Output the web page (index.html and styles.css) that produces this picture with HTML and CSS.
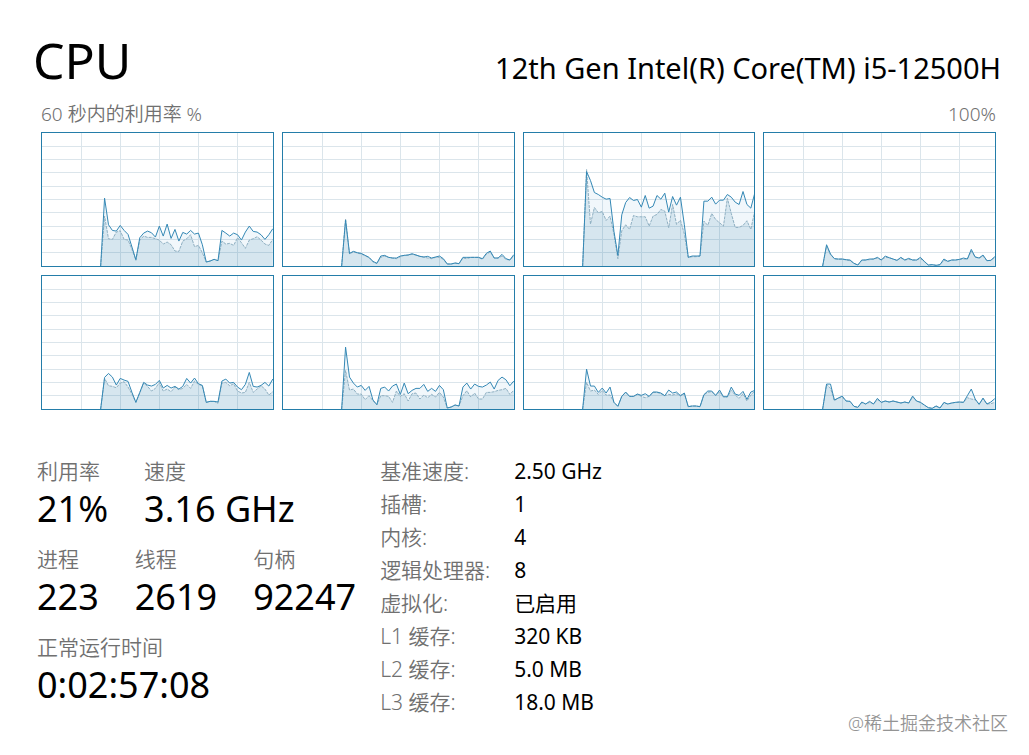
FILE: index.html
```
<!DOCTYPE html>
<html lang="zh-CN">
<head>
    <meta charset="UTF-8">
    <meta name="viewport" content="width=device-width, initial-scale=1.0">
    <title>CPU</title>
    <link rel="stylesheet" href="styles.css">
</head>
<body>
    <main class="container">
        <header class="header">
            <h1>CPU</h1>
            <p class="model">12th Gen Intel(R) Core(TM) i5-12500H</p>
        </header>

        <section class="usage">
            <div class="usage-title">
                <span>60 秒内的利用率 %</span>
                <span>100%</span>
            </div>
            <div class="cores" id="cores"></div>
        </section>

        <section class="details">
            <div class="stats">
                <dl class="stats-row">
                    <div class="stat"><dt>利用率</dt><dd>21%</dd></div>
                    <div class="stat"><dt>速度</dt><dd>3.16 GHz</dd></div>
                </dl>
                <dl class="stats-row">
                    <div class="stat"><dt>进程</dt><dd>223</dd></div>
                    <div class="stat"><dt>线程</dt><dd>2619</dd></div>
                    <div class="stat"><dt>句柄</dt><dd>92247</dd></div>
                </dl>
                <dl class="stats-row">
                    <div class="stat"><dt>正常运行时间</dt><dd>0:02:57:08</dd></div>
                </dl>
            </div>
            <table class="specs">
                <tr><th scope="row">基准速度:</th><td>2.50 GHz</td></tr>
                <tr><th scope="row">插槽:</th><td>1</td></tr>
                <tr><th scope="row">内核:</th><td>4</td></tr>
                <tr><th scope="row">逻辑处理器:</th><td>8</td></tr>
                <tr><th scope="row">虚拟化:</th><td>已启用</td></tr>
                <tr><th scope="row">L1 缓存:</th><td>320 KB</td></tr>
                <tr><th scope="row">L2 缓存:</th><td>5.0 MB</td></tr>
                <tr><th scope="row">L3 缓存:</th><td>18.0 MB</td></tr>
            </table>
        </section>
        <p class="watermark">@稀土掘金技术社区</p>
    </main>

    <script src="script.js"></script>
</body>
</html>
```

FILE: styles.css
```
* {
    margin: 0;
    padding: 0;
    box-sizing: border-box;
}

body {
    background: #fff;
    color: #000;
    font-family: 'Noto Sans', 'Noto Sans CJK SC', sans-serif;
}

.container {
    position: relative;
    min-height: 100vh;
    padding: 28px 33px 24px 37px;
}

.header {
    display: flex;
    justify-content: space-between;
    align-items: baseline;
    margin: 0 -5px 0 -4px;
}

h1 {
    font-size: 50px;
    font-weight: 400;
    line-height: 64px;
}

.model {
    font-size: 29px;
    line-height: 40px;
}

.usage {
    padding-left: 4px;
}

.usage-title {
    display: flex;
    justify-content: space-between;
    margin-top: 8px;
    margin-bottom: 4px;
    color: #707070;
    font-size: 19px;
    font-weight: 350;
    line-height: 28px;
}

.cores {
    display: grid;
    grid-template-columns: repeat(4, 1fr);
    gap: 8px;
}

.core {
    display: block;
    width: 100%;
    height: 135px;
    border: 1px solid #247da9;
}

.core path,
.core polyline {
    vector-effect: non-scaling-stroke;
}

.area {
    fill: #117dbb;
    fill-opacity: 0.06;
}

.area-kernel {
    fill: #1a6c9e;
    fill-opacity: 0.12;
}

.grid {
    fill: none;
    stroke: #c3d3dd;
    stroke-opacity: 0.6;
    shape-rendering: crispEdges;
}

.line {
    fill: none;
    stroke: #3488b5;
}

.line-kernel {
    fill: none;
    stroke: #8fb0c2;
    stroke-dasharray: 3 1;
}

.details {
    display: flex;
    gap: 24px;
    margin-top: 45px;
}

.stats-row {
    display: flex;
    gap: 36px;
    height: 88px;
}

dt,
th {
    color: #707070;
    font-weight: 350;
    text-align: left;
}

dt {
    font-size: 21px;
    line-height: 32px;
}

dd {
    font-size: 36px;
    line-height: 44px;
}

.specs {
    align-self: flex-start;
    border-collapse: collapse;
    font-size: 21px;
    line-height: 33px;
}

.specs th {
    width: 134px;
    font-size: 21px;
}

.watermark {
    position: absolute;
    right: 21px;
    bottom: 18px;
    color: #949494;
    font-size: 18px;
    font-weight: 350;
    line-height: 28px;
}
```

FILE: script.js
```
// 每个逻辑处理器的采样，高度范围 0-400，前 15 个采样为空
const START = 15;
const SAMPLES = 59;

const cores = [
    {
        total: [0,204,124,107,105,122,107,95,57,19,85,99,105,100,87,120,90,126,83,110,75,101,96,107,96,99,64,12,15,20,16,107,99,90,99,94,78,102,120,104,102,94,80,94,112],
        kernel: [0,150,82,80,102,106,80,78,50,17,78,90,86,86,82,78,66,72,64,45,44,75,82,94,58,62,40,12,15,20,16,75,66,68,62,85,70,53,78,82,88,78,66,62,80]
    },
    {
        total: [0,138,38,44,40,38,32,26,14,8,30,32,26,24,24,30,32,33,37,33,29,27,29,24,27,30,22,6,6,9,7,26,26,26,26,26,22,38,45,24,24,35,22,18,34],
        kernel: [0,142,36,43,39,36,31,25,12,8,26,30,26,24,22,28,32,33,35,33,29,27,24,22,26,26,20,6,6,9,7,24,22,26,26,26,20,36,42,24,24,30,20,18,30]
    },
    {
        total: [0,284,257,221,215,207,201,203,104,32,154,191,206,197,200,177,212,174,180,212,201,219,162,209,183,207,124,26,30,30,30,195,195,207,186,198,198,215,207,192,185,224,185,174,219],
        kernel: [0,290,126,176,160,164,137,150,96,22,106,124,110,152,148,148,148,120,150,155,170,165,115,185,125,138,96,26,28,28,30,135,122,158,140,130,120,204,158,116,116,122,136,110,165]
    },
    {
        total: [0,64,36,22,21,21,19,18,8,3,18,18,21,21,26,18,30,25,21,17,26,18,23,18,18,26,14,3,4,2,4,21,14,18,18,20,24,21,50,27,24,33,16,17,28],
        kernel: [0,60,34,22,20,21,18,16,8,3,17,18,19,21,24,18,26,25,21,17,24,18,20,18,18,22,13,3,4,2,4,17,14,18,18,20,21,21,45,27,24,30,16,17,26]
    },
    {
        total: [0,95,107,96,72,92,87,83,50,20,50,80,72,69,74,86,63,71,63,68,60,68,92,78,93,76,71,20,23,23,21,84,90,78,80,66,58,74,110,68,66,71,80,69,90],
        kernel: [0,92,70,68,64,78,82,66,45,20,48,78,68,54,62,80,54,60,52,66,58,62,74,62,84,74,70,20,23,23,17,78,80,70,76,54,48,50,80,50,60,70,60,42,52]
    },
    {
        total: [0,186,96,78,66,71,56,68,27,13,62,66,54,69,75,44,78,46,56,62,62,74,53,62,53,71,58,3,6,12,9,66,78,60,75,68,66,72,81,60,86,96,88,70,84],
        kernel: [0,116,57,60,45,45,28,40,25,13,40,40,38,20,54,38,46,24,46,48,30,42,34,44,36,50,36,3,6,12,9,40,55,36,48,30,30,50,50,52,56,58,62,44,56]
    },
    {
        total: [0,120,69,69,50,63,48,66,20,8,38,51,38,38,45,41,46,38,51,51,48,40,57,48,51,40,48,7,9,9,7,43,54,54,41,57,37,37,66,45,41,53,29,51,56],
        kernel: [0,80,54,57,44,56,42,42,20,8,38,50,38,38,44,38,34,38,50,50,46,40,44,42,46,40,46,7,9,9,7,43,50,52,40,52,36,36,56,42,32,46,24,42,54]
    },
    {
        total: [0,75,75,27,33,39,24,23,8,5,21,15,23,15,32,20,24,21,24,21,18,21,18,39,24,20,12,4,2,9,3,20,15,18,20,21,20,40,60,30,14,33,15,21,31],
        kernel: [0,74,62,25,33,35,24,23,8,5,19,15,20,15,28,20,24,21,24,21,18,21,18,36,24,20,12,4,2,9,3,18,15,18,20,21,20,34,30,28,14,30,15,16,20]
    }
];

function toPoints(values) {
    return values.map((v, i) => `${(START + i) * 10},${400 - v}`).join(' ');
}

function gridPath() {
    let d = '';
    for (let x = 100; x < SAMPLES * 10; x += 100) {
        d += `M${x} 0V400`;
    }
    for (let y = 40; y < 400; y += 40) {
        d += `M0 ${y}H590`;
    }
    return d;
}

document.getElementById('cores').innerHTML = cores.map((core, index) => {
    const total = toPoints(core.total);
    const kernel = toPoints(core.kernel);
    return `
        <svg class="core" viewBox="0 0 590 400" preserveAspectRatio="none" role="img" aria-label="CPU ${index}">
            <path class="grid" d="${gridPath()}"/>
            <polygon class="area" points="${total} 590,400"/>
            <polygon class="area-kernel" points="${kernel} 590,400"/>
            <polyline class="line-kernel" points="${kernel}"/>
            <polyline class="line" points="${total}"/>
        </svg>`;
}).join('');
```
